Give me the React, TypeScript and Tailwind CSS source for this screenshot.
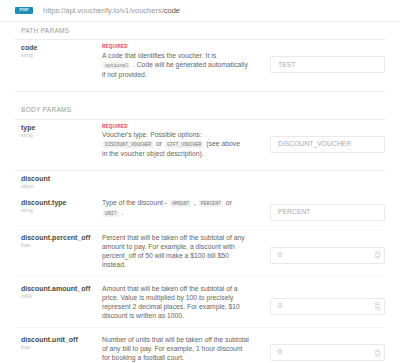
import React from "react";

type Part = string | { code: string };

type Row = {
  name: string;
  type: string;
  required?: boolean;
  lines?: Part[][];
  input?: { placeholder: string; number?: boolean };
  pad: string;
  border: string;
};

const code = (c: string) => ({ code: c });

const rows: Row[] = [
  {
    name: "type",
    type: "string",
    required: true,
    lines: [
      ["Voucher's type. Possible options:"],
      [code("DISCOUNT_VOUCHER"), " or ", code("GIFT_VOUCHER"), " (see above"],
      ["in the voucher object description)."],
    ],
    input: { placeholder: "DISCOUNT_VOUCHER" },
    pad: "pt-[3px] pb-[12px]",
    border: "border-b border-[#ececec]",
  },
  {
    name: "discount",
    type: "object",
    pad: "pt-[3px] pb-[1px]",
    border: "",
  },
  {
    name: "discount.type",
    type: "string",
    lines: [
      ["Type of the discount - ", code("AMOUNT"), " , ", code("PERCENT"), " or"],
      [code("UNIT"), " ."],
    ],
    input: { placeholder: "PERCENT" },
    pad: "py-[7px]",
    border: "border-b border-[#f6f6f6]",
  },
  {
    name: "discount.percent_off",
    type: "float",
    lines: [
      ["Percent that will be taken off the subtotal of any"],
      ["amount to pay. For example, a discount with"],
      ["percent_off of 50 will make a $100 bill $50"],
      ["instead."],
    ],
    input: { placeholder: "0", number: true },
    pad: "py-[7px]",
    border: "border-b border-[#f6f6f6]",
  },
  {
    name: "discount.amount_off",
    type: "int64",
    lines: [
      ["Amount that will be taken off the subtotal of a"],
      ["price. Value is multiplied by 100 to precisely"],
      ["represent 2 decimal places. For example, $10"],
      ["discount is written as 1000."],
    ],
    input: { placeholder: "0", number: true },
    pad: "py-[7px]",
    border: "border-b border-[#f6f6f6]",
  },
  {
    name: "discount.unit_off",
    type: "float",
    lines: [
      ["Number of units that will be taken off the subtotal"],
      ["of any bill to pay. For example, 1 hour discount"],
      ["for booking a football court."],
    ],
    input: { placeholder: "0", number: true },
    pad: "py-[7px]",
    border: "",
  },
];

function Chip({ text }: { text: string }) {
  return (
    <span className="mx-[1px] rounded-[1px] bg-[#f1f1f1] px-[2px] py-[1px] font-['Liberation_Mono',monospace] text-[4.8px] text-[#777]">
      {text}
    </span>
  );
}

function Spinner() {
  return (
    <svg width="5" height="8" viewBox="0 0 5 8" className="shrink-0">
      <rect x="0.3" y="0.3" width="4.4" height="7.4" rx="1.2" fill="none" stroke="#c9c9c9" strokeWidth="0.6" />
      <path d="M1.4 3 L2.5 1.8 L3.6 3" fill="none" stroke="#999" strokeWidth="0.6" />
      <path d="M1.4 5 L2.5 6.2 L3.6 5" fill="none" stroke="#999" strokeWidth="0.6" />
    </svg>
  );
}

function Field({ placeholder, number }: { placeholder: string; number?: boolean }) {
  return (
    <div className="flex h-[17px] w-[115px] translate-y-[4px] items-center justify-between self-center rounded-[2px] border border-[#e9e9e9] bg-white pl-[7px] pr-[4px]">
      <span className="text-[6.8px] text-[#aaa]">{placeholder}</span>
      {number && <Spinner />}
    </div>
  );
}

function Desc({ lines }: { lines: Part[][] }) {
  return (
    <div className="text-[6.8px] leading-[9px] text-[#666]">
      {lines.map((line, i) => (
        <div key={i} className="whitespace-pre">
          {line.map((p, j) => (typeof p === "string" ? <span key={j}>{p}</span> : <Chip key={j} text={p.code} />))}
        </div>
      ))}
    </div>
  );
}

function ParamRow({ row }: { row: Row }) {
  return (
    <div className={`flex items-start ${row.pad} ${row.border}`}>
      <div className="w-[87px] shrink-0 pl-[6px]">
        <div className="text-[7px] font-bold leading-[9px] text-[#4a4a4a]">{row.name}</div>
        <div className="text-[4.8px] leading-[7px] text-[#bbb]">{row.type}</div>
      </div>
      <div className="w-[160px] shrink-0">
        {row.required && (
          <div className="text-[4.6px] font-bold leading-[7.5px] tracking-[0.2px] text-[#e8384f]">REQUIRED</div>
        )}
        {row.lines && <Desc lines={row.lines} />}
      </div>
      {row.input && (
        <div className="ml-auto flex self-stretch">
          <Field placeholder={row.input.placeholder} number={row.input.number} />
        </div>
      )}
    </div>
  );
}

function SectionTitle({ title }: { title: string }) {
  return (
    <div className="flex h-[18px] items-center border-b border-[#ececec] pl-[6px] text-[6.5px] tracking-[0.3px] text-[#9a9a9a]">
      {title}
    </div>
  );
}

export default function App() {
  return (
    <div className="h-[363px] w-[400px] overflow-hidden bg-white font-['Liberation_Sans',Arial,sans-serif]">
      <div className="flex h-[22px] items-center border-b border-[#f0f0f0] px-[15px]">
        <div className="flex h-[7px] w-[18px] items-center justify-center rounded-[1px] bg-[#1c8fb6] text-[3.4px] font-bold text-white">
          POST
        </div>
        <div className="ml-[10px] text-[7.5px] text-[#9a9a9a]">
          https://api.voucherify.io/v1/vouchers/<span className="text-[#555]">code</span>
        </div>
      </div>

      <div className="px-[15px]">
        <SectionTitle title="PATH PARAMS" />
        <ParamRow
          row={{
            name: "code",
            type: "string",
            required: true,
            lines: [
              ["A code that identifies the voucher. It is"],
              [code("optional"), " . Code will be generated automatically"],
              ["if not provided."],
            ],
            input: { placeholder: "TEST" },
            pad: "pt-[3px] pb-[12px]",
            border: "border-b border-[#ececec]",
          }}
        />

        <div className="mt-[10px]">
          <SectionTitle title="BODY PARAMS" />
          {rows.map((r) => (
            <ParamRow key={r.name} row={r} />
          ))}
        </div>
      </div>
    </div>
  );
}
